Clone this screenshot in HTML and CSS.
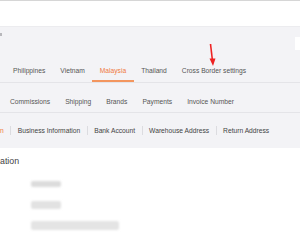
FILE: index.html
```html
<!DOCTYPE html>
<html>
<head>
<meta charset="utf-8">
<link rel="stylesheet" href="styles.css">
</head>
<body>
<div class="topline"></div>
<div class="header"></div>
<div class="main">
  <div class="dot"></div>
  <div class="side-box"></div>
  <nav class="tabs tabs-country">
    <span class="tab">Philippines</span>
    <span class="tab">Vietnam</span>
    <span class="tab active">Malaysia</span>
    <span class="tab">Thailand</span>
    <span class="tab">Cross Border settings</span>
  </nav>
  <nav class="tabs tabs-section">
    <span class="tab">Commissions</span>
    <span class="tab">Shipping</span>
    <span class="tab">Brands</span>
    <span class="tab">Payments</span>
    <span class="tab">Invoice Number</span>
  </nav>
  <nav class="subtabs">
    <span class="sub active">n</span>
    <span class="sub">Business Information</span>
    <span class="sub">Bank Account</span>
    <span class="sub">Warehouse Address</span>
    <span class="sub">Return Address</span>
  </nav>
</div>
<section class="content">
  <h2 class="title">ation</h2>
  <div class="field"><span class="blob b1"></span></div>
  <div class="field"><span class="blob b2"></span></div>
  <div class="field"><span class="blob b3"></span></div>
</section>
<svg class="arrow" width="10" height="25" viewBox="0 0 10 25">
  <line x1="2.5" y1="1" x2="4.5" y2="18" stroke="#ee2222" stroke-width="1.6"/>
  <polygon points="1.5,15.5 7.5,15.5 5,23" fill="#ee2222"/>
</svg>
</body>
</html>
```

FILE: styles.css
```css
* { box-sizing: border-box; margin: 0; padding: 0; }
html, body { width: 300px; height: 240px; overflow: hidden; }
body {
  font-family: "Liberation Sans", Arial, sans-serif;
  background: #ffffff;
  color: #555;
  position: relative;
}
.topline { height: 1px; background: #d6d6d6; }
.header {
  height: 26px;
  background: #ffffff;
  border-bottom: 1px solid #ececef;
}
.main {
  position: relative;
  background: #f3f3f6;
  padding-top: 33px;
  height: 121px;
}
.dot {
  position: absolute;
  left: 0; top: 6px;
  width: 2px; height: 3px;
  background: #b8b8bc;
}
.side-box {
  position: absolute;
  right: 0; top: 10px;
  width: 5px; height: 13px;
  background: #ffffff;
}
.tabs {
  display: flex;
  border-bottom: 1px solid #e4e4e8;
  font-size: 6.7px;
  color: #555;
  white-space: nowrap;
}
.tabs-country { height: 23px; padding-left: 5.5px; }
.tabs-country .tab {
  padding: 0 7.5px;
  height: 22px;
  line-height: 21px;
}
.tabs-country .tab.active {
  color: #f07a3e;
  border-bottom: 2px solid #f3965f;
}
.tabs-section { height: 30px; padding-left: 2.5px; }
.tabs-section .tab {
  padding: 0 7.5px;
  line-height: 37px;
}
.subtabs {
  display: flex;
  align-items: center;
  height: 35px;
  font-size: 6.7px;
  color: #444;
  white-space: nowrap;
  padding-bottom: 1px;
}
.sub {
  padding: 0 6.5px;
  border-left: 1px solid #dcdce0;
  line-height: 9px;
}
.sub:first-child { border-left: 0; padding-left: 0; }
.sub.active { color: #f07a3e; }
.content {
  background: #ffffff;
  height: 92px;
  padding-top: 6px;
}
.title {
  font-size: 8.8px;
  font-weight: 400;
  color: #444;
  line-height: 14px;
}
.field { height: 21px; padding-left: 31px; display: flex; align-items: center; }
.field:nth-of-type(1) { margin-top: 5px; }
.blob { display: block; border-radius: 2px; filter: blur(1px); }
.b1 { width: 30px; height: 6px; background: #dcdcdc; }
.b2 { width: 30px; height: 8px; background: #e2e2e2; }
.b3 { width: 88px; height: 9px; background: #e4e4e4; }
.arrow {
  position: absolute;
  left: 208px;
  top: 43px;
}
```
